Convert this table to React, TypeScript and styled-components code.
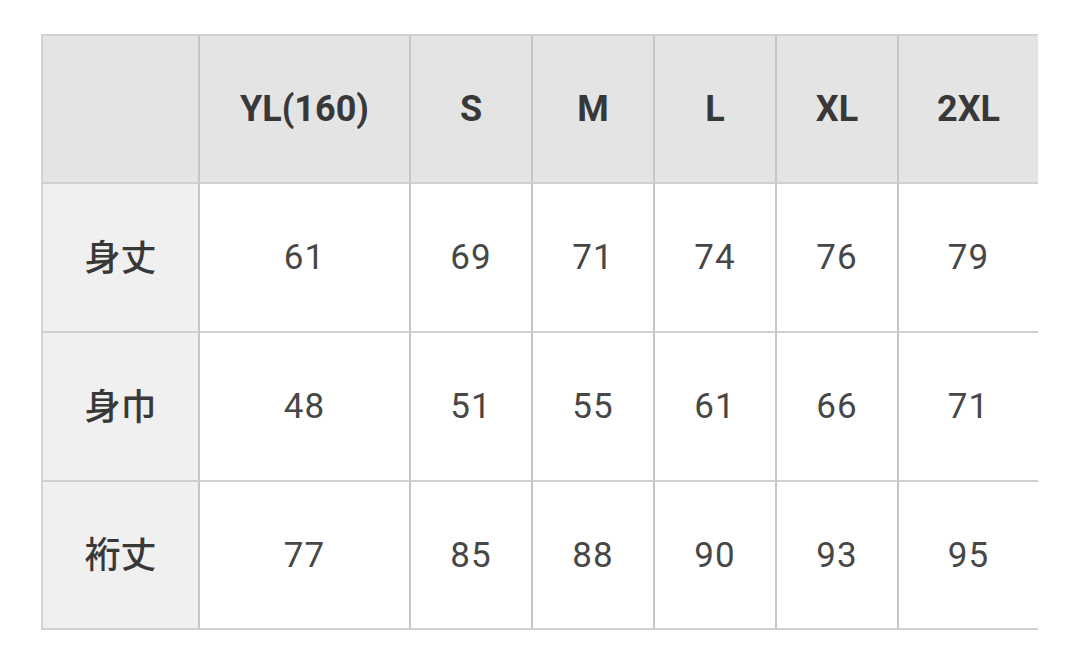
import React from "react";
import styled, { createGlobalStyle } from "styled-components";

const Global = createGlobalStyle`
  html, body { margin: 0; padding: 0; background: #ffffff; }
  body { width: 1080px; height: 672px; overflow: hidden; }
`;

const Page = styled.div`
  padding: 34px 0 0 41px;
`;

const Table = styled.div`
  display: grid;
  grid-template-columns: 157px 211px 122px 122px 122px 122px 139px;
  grid-template-rows: 148px 149px 149px 148px;
  width: 997px;
  border-top: 2px solid #d2d2d2;
  border-left: 2px solid #d2d2d2;
  box-sizing: border-box;
`;

const Cell = styled.div<{ $kind: "corner" | "head" | "label" | "data"; $last?: boolean }>`
  display: flex;
  align-items: center;
  justify-content: center;
  box-sizing: border-box;
  border-bottom: 2px solid #d0d0d0;
  border-right: ${(p) => (p.$last ? "none" : "2px solid #c6c6c6")};
  padding-bottom: ${(p) => (p.$kind === "label" ? "6px" : "0")};
  background: ${(p) =>
    p.$kind === "corner" || p.$kind === "head"
      ? "#e4e4e4"
      : p.$kind === "label"
      ? "#f0f0f0"
      : "#ffffff"};
  color: ${(p) => (p.$kind === "data" ? "#474747" : "#383838")};
  font-family: ${(p) =>
    p.$kind === "label"
      ? `"Noto Sans CJK JP", sans-serif`
      : `Roboto, "Noto Sans", sans-serif`};
  font-size: ${(p) => (p.$kind === "data" ? "35px" : "36px")};
  font-weight: ${(p) =>
    p.$kind === "head" ? 700 : p.$kind === "label" ? 500 : 400};
  letter-spacing: ${(p) => (p.$kind === "data" ? "1px" : "0")};
`;

const sizes = ["YL(160)", "S", "M", "L", "XL", "2XL"];
const rows: [string, number[]][] = [
  ["身丈", [61, 69, 71, 74, 76, 79]],
  ["身巾", [48, 51, 55, 61, 66, 71]],
  ["裄丈", [77, 85, 88, 90, 93, 95]],
];

export default function App() {
  return (
    <>
      <Global />
      <Page>
        <Table>
          <Cell $kind="corner" />
          {sizes.map((s, i) => (
            <Cell key={s} $kind="head" $last={i === sizes.length - 1}>
              {s}
            </Cell>
          ))}
          {rows.map(([label, vals]) => (
            <React.Fragment key={label}>
              <Cell $kind="label">{label}</Cell>
              {vals.map((v, i) => (
                <Cell key={i} $kind="data" $last={i === vals.length - 1}>
                  {v}
                </Cell>
              ))}
            </React.Fragment>
          ))}
        </Table>
      </Page>
    </>
  );
}
